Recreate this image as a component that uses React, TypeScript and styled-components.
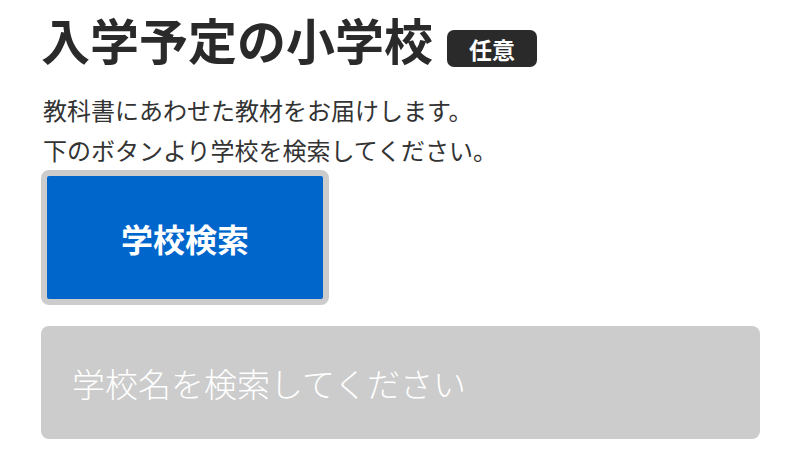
import styled, { createGlobalStyle } from "styled-components";

const GlobalStyle = createGlobalStyle`
  html, body {
    margin: 0;
    padding: 0;
    background: #fff;
  }

  body {
    font-family: "Noto Sans CJK JP", "Noto Sans", sans-serif;
    color: #333;
  }
`;

export default function App() {
  return (
    <>
      <GlobalStyle />
      <Page>
        <Header>
          <Title>入学予定の小学校</Title>
          <Badge>任意</Badge>
        </Header>

        <Description>
          教科書にあわせた教材をお届けします。
          <br />
          下のボタンより学校を検索してください。
        </Description>

        <SearchButton type="button">学校検索</SearchButton>

        <SchoolInput type="text" placeholder="学校名を検索してください" />
      </Page>
    </>
  );
}

const Page = styled.div`
  display: flex;
  flex-direction: column;
  align-items: flex-start;

  padding: 11px 40px 0 41px;
`;

const Header = styled.div`
  display: flex;
  align-items: flex-end;
  gap: 14px;
`;

const Title = styled.h1`
  margin: 0;

  font-size: 49px;
  font-weight: 700;
  line-height: 56px;
  color: #2a2a2a;
`;

const Badge = styled.span`
  display: flex;
  align-items: center;

  height: 37px;
  padding: 0 22px;

  border-radius: 7px;
  background: #2a2a2a;

  color: #fff;
  font-size: 23px;
  font-weight: 700;
`;

const Description = styled.p`
  margin: 23px 0 0 2px;

  font-size: 24px;
  line-height: 40px;
  color: #333;
`;

const SearchButton = styled.button`
  display: flex;
  justify-content: center;
  align-items: center;

  width: 288px;
  height: 135px;

  border: 6px solid #cccccc;
  border-radius: 8px;
  background: #0066cc;

  color: #fff;
  font-family: inherit;
  font-size: 32px;
  font-weight: 700;
  cursor: pointer;
`;

const SchoolInput = styled.input`
  width: 719px;
  height: 113px;
  margin-top: 21px;
  padding: 0 31px;
  box-sizing: border-box;

  border: none;
  border-radius: 8px;
  background: #cccccc;
  outline: none;

  color: #333;
  font-family: inherit;
  font-size: 33px;
  font-weight: 300;

  &::placeholder {
    color: #fff;
    opacity: 1;
  }
`;
